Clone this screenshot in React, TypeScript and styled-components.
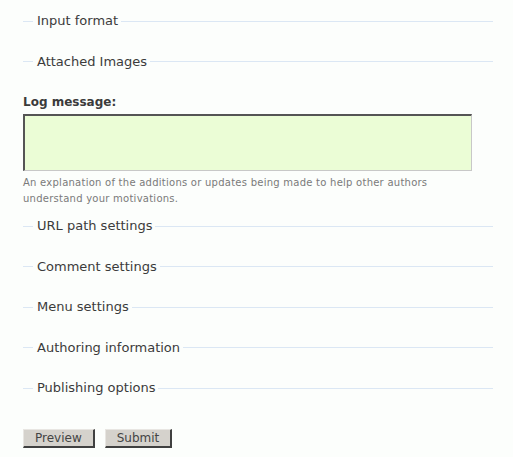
import React from 'react';
import styled, { createGlobalStyle } from 'styled-components';

const GlobalStyle = createGlobalStyle`
  html, body {
    margin: 0;
    padding: 0;
    background: #fcfefc;
  }
  body {
    font-family: "DejaVu Sans", Verdana, sans-serif;
    color: #494949;
  }
`;

const Page = styled.form`
  width: 513px;
  height: 457px;
  box-sizing: border-box;
  padding: 13px 20px 0 23px;
  background: #fcfefc;
`;

const Collapsed = styled.fieldset`
  margin: 0 0 24.5px 0;
  padding: 0 10px;
  border: 0;
  border-top: 1px solid #dbe7f4;
  min-inline-size: 0;
`;

const Legend = styled.legend`
  padding: 0 3px 0 4px;
  font-size: 13px;
  line-height: 16px;
  color: #3b3b3b;
`;

const FormItem = styled.div`
  margin: 0 0 11px 0;
`;

const Label = styled.label`
  display: block;
  font-size: 12px;
  font-weight: bold;
  line-height: 16px;
  margin-bottom: 4px;
  color: #3b3b3b;
`;

const TextArea = styled.textarea`
  display: block;
  width: 449px;
  height: 57px;
  box-sizing: border-box;
  margin: 0;
  padding: 2px;
  resize: none;
  background: #ebfdd6;
  border-style: solid;
  border-width: 2px 1px 1px 2px;
  border-color: #555 #c8c8c8 #c8c8c8 #555;
  outline: none;
`;

const Description = styled.div`
  margin-top: 4px;
  font-size: 10px;
  letter-spacing: 0.25px;
  line-height: 16px;
  color: #7a7a7a;
`;

const Buttons = styled.div`
  display: flex;
  gap: 10px;
  margin-top: 33px;
`;

const Button = styled.button`
  font-family: "DejaVu Sans", Verdana, sans-serif;
  font-size: 12px;
  color: #444;
  background: #d5d2cc;
  border-style: solid;
  border-width: 1px 2px 2px 1px;
  border-color: #e8e6e2 #404040 #404040 #e8e6e2;
  padding: 0 11px;
  height: 19px;
  line-height: 15px;
  margin: 0;
`;

const Section: React.FC<{ title: string }> = ({ title }) => (
  <Collapsed>
    <Legend>{title}</Legend>
  </Collapsed>
);

const App: React.FC = () => (
  <>
    <GlobalStyle />
    <Page onSubmit={(e) => e.preventDefault()}>
      <Section title="Input format" />
      <Section title="Attached Images" />
      <FormItem>
        <Label>Log message:</Label>
        <TextArea />
        <Description>
          An explanation of the additions or updates being made to help other authors
          <br />
          understand your motivations.
        </Description>
      </FormItem>
      <Section title="URL path settings" />
      <Section title="Comment settings" />
      <Section title="Menu settings" />
      <Section title="Authoring information" />
      <Section title="Publishing options" />
      <Buttons>
        <Button type="button">Preview</Button>
        <Button type="submit">Submit</Button>
      </Buttons>
    </Page>
  </>
);

export default App;
